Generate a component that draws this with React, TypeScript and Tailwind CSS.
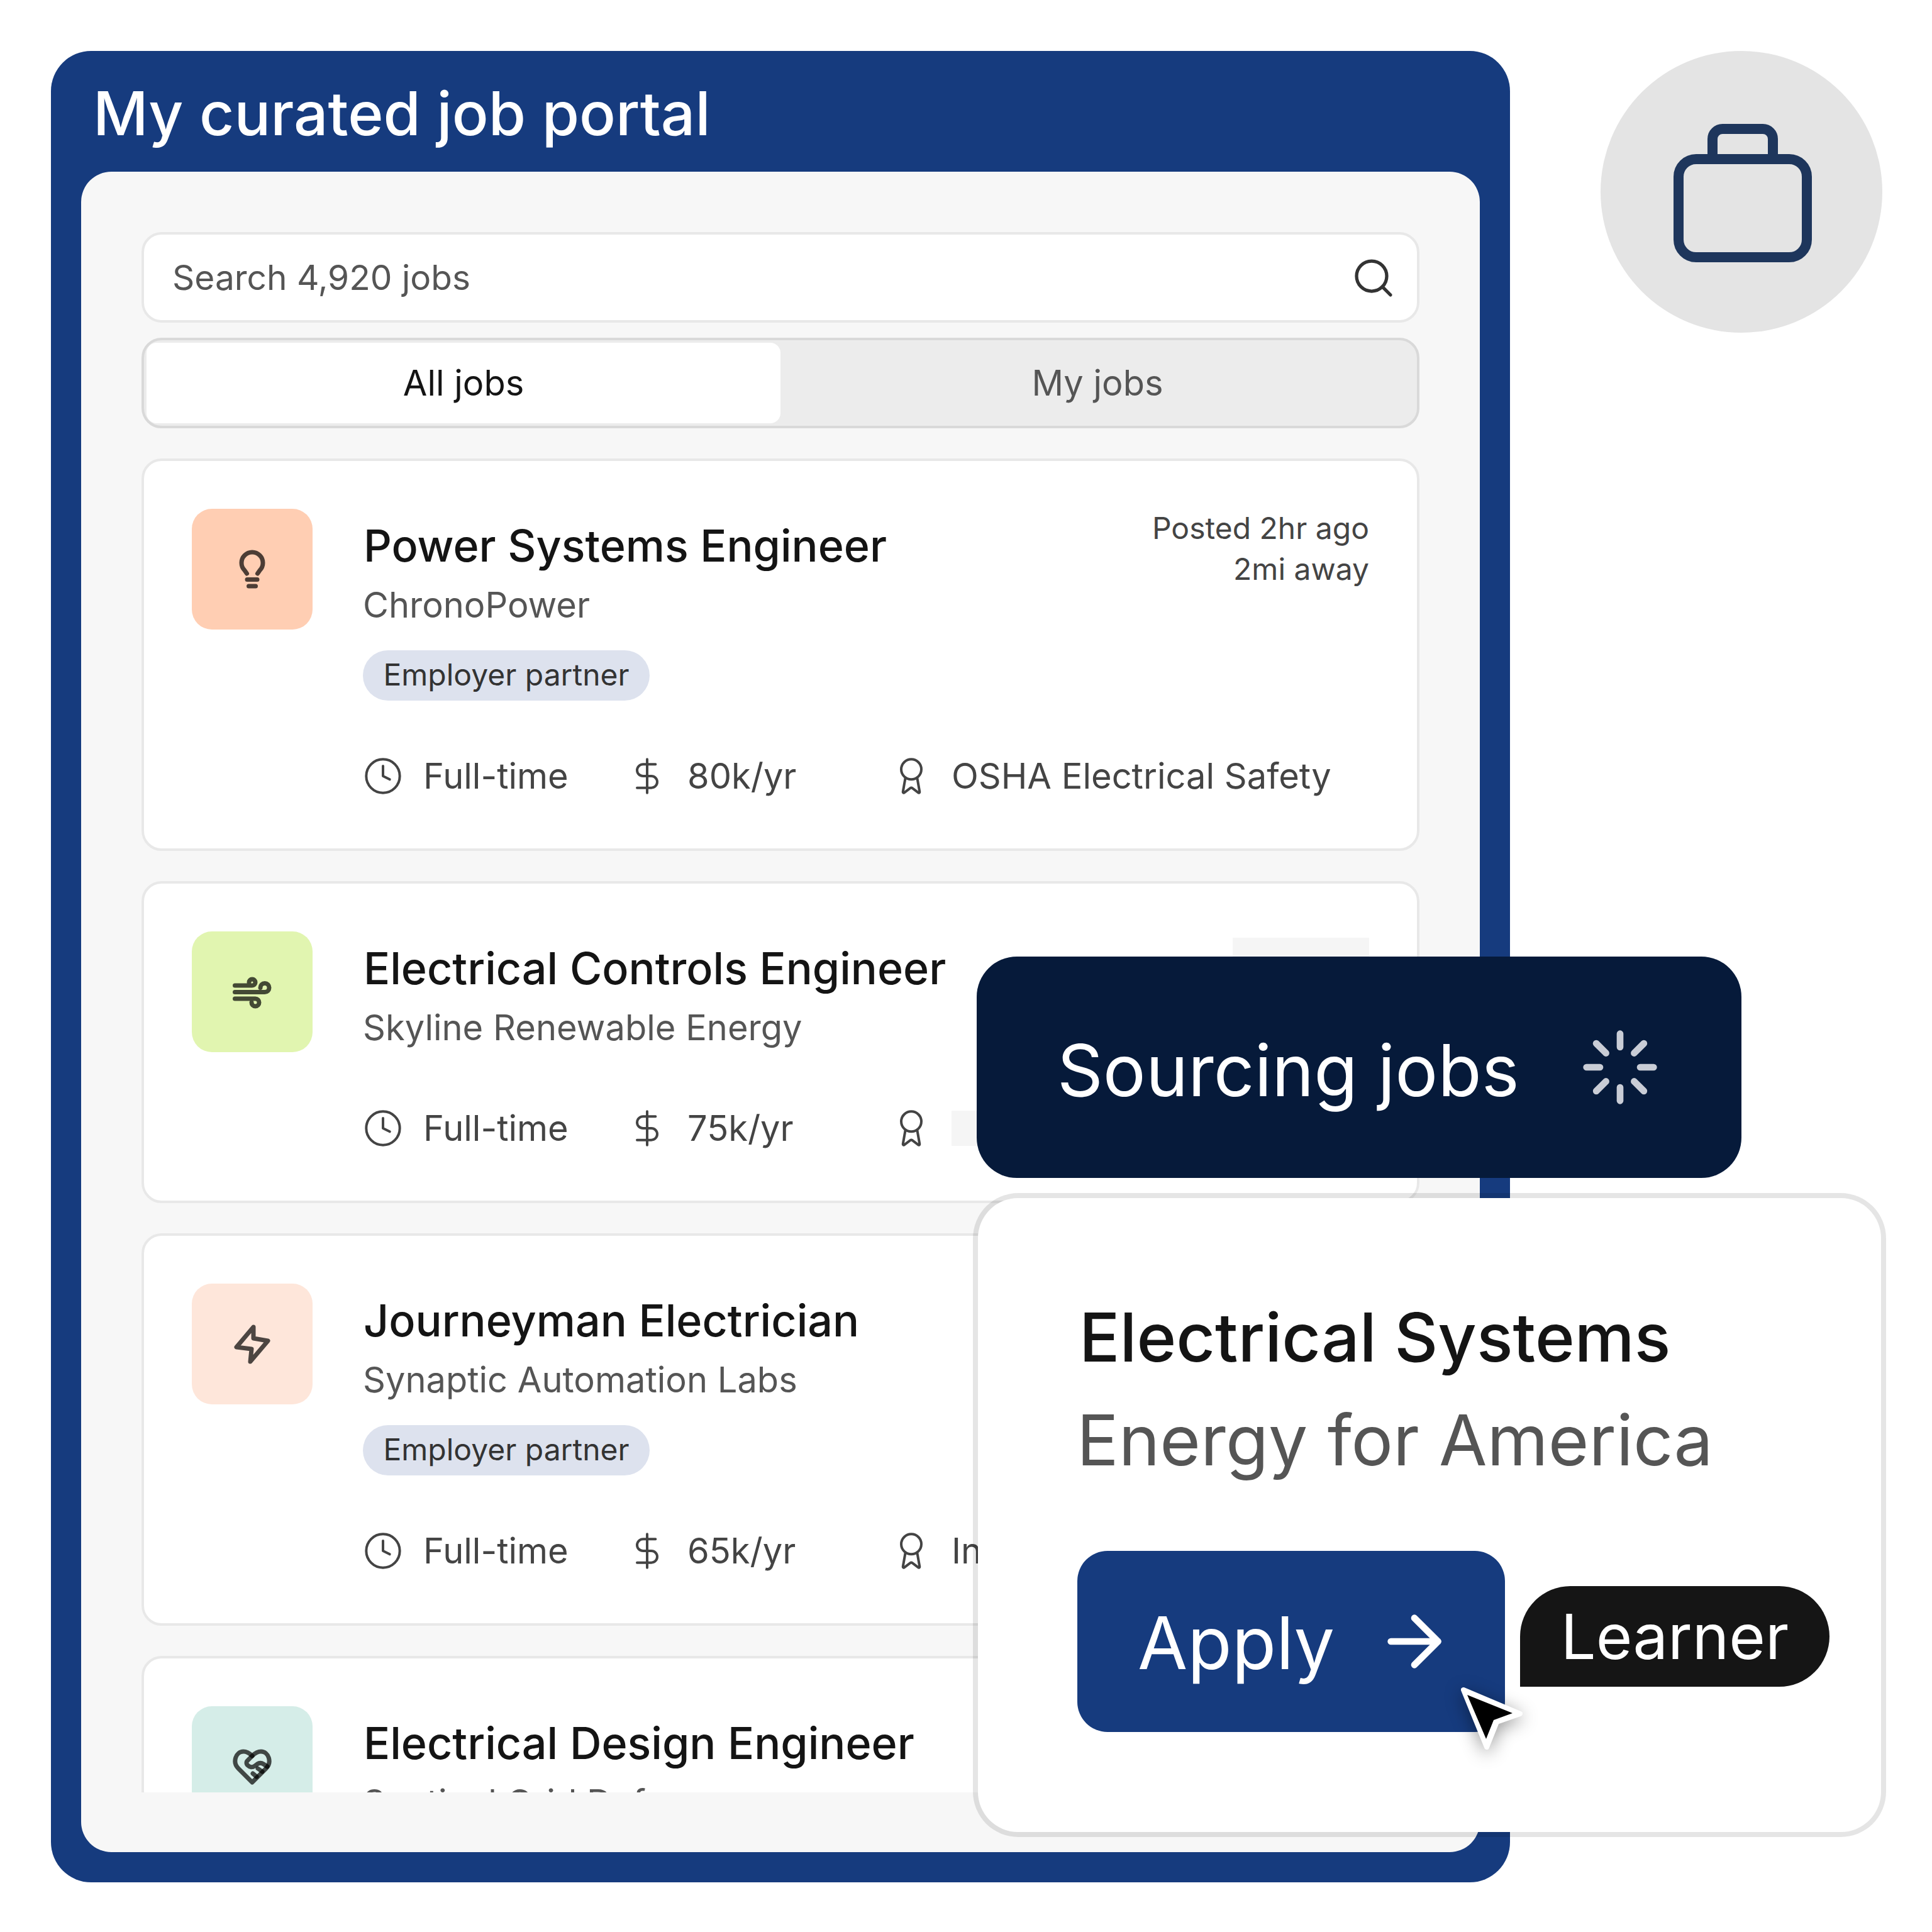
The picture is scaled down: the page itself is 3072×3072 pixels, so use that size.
import { ArrowRight, Award, Clock, DollarSign, Loader, Search } from "lucide-react";
import type { ReactNode } from "react";

const display = "font-['Inter',sans-serif]";

function BulbIcon() {
  return (
    <svg width="100" height="100" viewBox="0 0 100 100" fill="none" stroke="#000" strokeOpacity="0.7" strokeWidth="7" strokeLinecap="round" strokeLinejoin="round">
      <path d="M41.5 57 38 52a17 17 0 1 1 24 0l-3.500 5" />
      <path d="M42 66.500h16M44.500 77h11" />
    </svg>
  );
}

function WindIcon() {
  return (
    <svg width="100" height="100" viewBox="0 0 100 100" fill="none" stroke="#000" strokeOpacity="0.7" strokeWidth="7" strokeLinecap="round" strokeLinejoin="round">
      <path d="M22.500 40H50a5 5 0 1 0-5-5" />
      <path d="M22.500 50.500H70a7 7 0 1 0-7-7" />
      <path d="M22.500 61H55a6 6 0 1 1-6 6" />
    </svg>
  );
}

function BoltIcon() {
  return (
    <svg width="100" height="100" viewBox="0 0 100 100" fill="none" stroke="#000" strokeOpacity="0.7" strokeWidth="7" strokeLinecap="round" strokeLinejoin="round">
      <path d="M52 23 25 55l24 3-2 20 28-33-23-4z" />
    </svg>
  );
}

function HeartIcon() {
  return (
    <svg width="100" height="100" viewBox="0 0 100 100" fill="none" stroke="#000" strokeOpacity="0.7" strokeWidth="7" strokeLinecap="round" strokeLinejoin="round">
      <path d="M50 75 28 53C18 43 24 26 36 26c7 0 11 4 14 7 3-3 7-7 14-7 12 0 18 17 8 27z" />
      <path d="m50 33-7 7a5 5 0 0 0 0 8c3 3 7 4 11 1l4-3c3-2 7-2 10 0l6 4" />
      <path d="m51 61 6 5M59 53l7 5" />
    </svg>
  );
}

function MetaItem({ icon, children }: { icon: ReactNode; children: ReactNode }) {
  return (
    <div className="flex w-[420px] shrink-0 items-center gap-[32px] whitespace-nowrap">
      <span className="shrink-0">{icon}</span>
      {children}
    </div>
  );
}

function JobCard({
  tile,
  icon,
  title,
  company,
  partner,
  pay,
  cert,
  right,
}: {
  tile: string;
  icon: ReactNode;
  title: string;
  company: string;
  partner?: boolean;
  pay: string;
  cert: ReactNode;
  right?: ReactNode;
}) {
  return (
    <div className="flex shrink-0 gap-[80px] rounded-[32px] border-4 border-[#e8e8e8] bg-white px-[76px] pt-[76px] pb-[79px]">
      <div className={`flex h-[192px] w-[192px] shrink-0 items-center justify-center rounded-[32px] ${tile}`}>{icon}</div>
      <div className="min-w-0 flex-1">
        <div className="flex items-start justify-between">
          <div>
            <div className={`${display} mt-[15px] ml-[1px] text-[70px] leading-[88px] font-medium text-[#141414]`}>{title}</div>
            <div className="mt-[14px] text-[56px] leading-[72px] text-[#555]">{company}</div>
          </div>
          {right}
        </div>
        {partner && (
          <div className="mt-[36px] flex h-[80px] w-[456px] items-center justify-center rounded-full bg-[#dde2ee] pb-[2px] text-[48px] text-[#333]">
            Employer partner
          </div>
        )}
        <div className={`flex text-[56px] leading-[72px] text-[#444] ${partner ? "mt-[84px]" : "mt-[88px]"}`}>
          <MetaItem icon={<Clock size={64} strokeWidth={1.5} />}>Full-time</MetaItem>
          <MetaItem icon={<DollarSign size={64} strokeWidth={1.5} />}>{pay}</MetaItem>
          <MetaItem icon={<Award size={64} strokeWidth={1.5} />}>{cert}</MetaItem>
        </div>
      </div>
    </div>
  );
}

export default function App() {
  return (
    <div className="relative h-[3072px] w-[3072px] overflow-hidden bg-white font-['Inter',sans-serif]">
      <div className="flex items-start gap-[144px] p-[81px]">
        {/* Portal */}
        <div className="flex h-[2912px] w-[2320px] shrink-0 flex-col rounded-[64px] bg-[#163b7e] px-[48px] pb-[48px]">
          <h1 className={`${display} flex h-[192px] items-center pt-[6px] pl-[19px] text-[96px] font-medium text-white`}>
            My curated job portal
          </h1>
          <div className="flex-1 rounded-[48px] bg-[#f7f7f7] px-[96px] pt-[96px]">
            <div className={`${display} flex h-[144px] items-center justify-between rounded-[32px] border-4 border-[#e8e8e8] bg-white pt-[1px] pr-[33px] pl-[45px] text-[55px] text-[#555]`}>
              Search 4,920 jobs
              <Search size={72} strokeWidth={1.75} className="text-[#333]" />
            </div>
            <div className={`${display} mt-[24px] flex h-[144px] rounded-[32px] border-4 border-[#d9d9d9] bg-[#ececec] p-[4px] text-[56px]`}>
              <div className="flex flex-1 items-center justify-center rounded-[16px] bg-white text-[#141414]">All jobs</div>
              <div className="flex flex-1 items-center justify-center text-[#555]">My jobs</div>
            </div>
            <div className="mt-[48px] flex h-[2121px] flex-col gap-[48px] overflow-hidden">
              <JobCard
                tile="bg-[#ffceb3]"
                icon={<BulbIcon />}
                title="Power Systems Engineer"
                company="ChronoPower"
                partner
                pay="80k/yr"
                cert="OSHA Electrical Safety"
                right={
                  <div className="-mt-[2px] text-right text-[48px] leading-[65px] text-[#444]">
                    Posted 2hr ago
                    <br />
                    2mi away
                  </div>
                }
              />
              <JobCard
                tile="bg-[#e1f5b0]"
                icon={<WindIcon />}
                title="Electrical Controls Engineer"
                company="Skyline Renewable Energy"
                pay="75k/yr"
                cert={<div className="h-[56px] w-[400px] bg-[#f5f5f5]" />}
                right={<div className="mt-[10px] h-[100px] w-[217px] bg-[#f5f5f5]" />}
              />
              <JobCard
                tile="bg-[#fee6da]"
                icon={<BoltIcon />}
                title="Journeyman Electrician"
                company="Synaptic Automation Labs"
                partner
                pay="65k/yr"
                cert="Industrial Wiring"
              />
              <JobCard
                tile="bg-[#d5ede8]"
                icon={<HeartIcon />}
                title="Electrical Design Engineer"
                company="Sentinel Grid Defense"
                pay="70k/yr"
                cert="Grid Design"
              />
            </div>
          </div>
        </div>

        {/* Briefcase badge */}
        <div className="flex h-[448px] w-[448px] shrink-0 items-center justify-center rounded-full bg-[#e4e4e4]">
          <svg width="220" height="220" viewBox="0 0 220 220" fill="none" stroke="#1e365c" strokeWidth="16" className="mt-[4px] ml-[4px]">
            <rect x="8" y="56" width="204" height="156" rx="28" />
            <path d="M62 56V24a16 16 0 0 1 16-16h64a16 16 0 0 1 16 16v32" />
          </svg>
        </div>
      </div>

      {/* Status toast */}
      <div className="absolute top-[1521px] left-[1553px] flex h-[352px] w-[1216px] items-center rounded-[64px] bg-[#061a3a] pr-[129px] pl-[128px]">
        <span className={`${display} pt-[10px] text-[113.5px] whitespace-nowrap text-white`}>Sourcing jobs</span>
        <Loader size={128} strokeWidth={2} className="ml-auto text-[#c9cdd6]" />
      </div>

      {/* Job detail card */}
      <div className="absolute top-[1897px] left-[1547px] h-[1024px] w-[1452px] rounded-[72px] border-8 border-[rgba(0,0,0,0.1)] bg-white bg-clip-padding pt-[151px] pl-[158px]">
        <div className={`${display} ml-[3px] text-[107px] leading-[140px] font-medium text-[#141414]`}>Electrical Systems</div>
        <div className="mt-[24px] -ml-[1px] text-[111px] leading-[140px] text-[#555]">Energy for America</div>
        <div className="mt-[106px] flex items-start gap-[24px]">
          <div className="flex h-[288px] w-[680px] items-center justify-between rounded-[48px] bg-[#163b7e] pr-[80px] pl-[96px] text-white">
            <span className={`${display} pt-[6px] text-[115px]`}>Apply</span>
            <ArrowRight size={128} strokeWidth={2} />
          </div>
          <div className={`${display} mt-[56px] flex h-[160px] w-[492px] items-center justify-center rounded-[80px] rounded-bl-none bg-[#151515] text-[99px] text-white`}>
            Learner
          </div>
        </div>
      </div>

      {/* Cursor */}
      <svg width="140" height="140" viewBox="0 0 140 140" className="absolute top-[2660px] left-[2300px] drop-shadow-[0_6px_14px_rgba(0,0,0,0.4)]">
        <path d="M27 27 117 65 80 78 64 118z" fill="#fff" stroke="#fff" strokeWidth="8" strokeLinejoin="round" />
        <path d="M33 35 105 64 75 75 63 105z" fill="#000" />
      </svg>
    </div>
  );
}
